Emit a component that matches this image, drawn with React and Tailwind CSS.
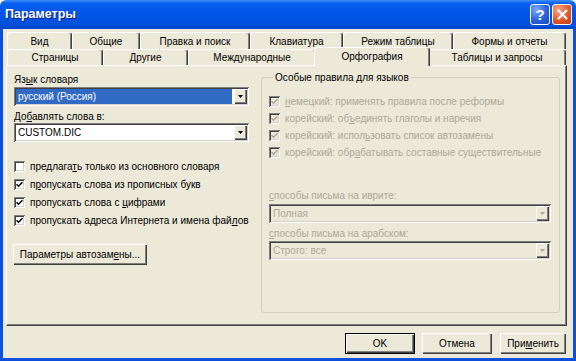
import React from 'react';

// '&' marks the accelerator letter, as in Windows resource strings
function Acc({ text }) {
  const i = text.indexOf('&');
  if (i < 0) return text;
  return (
    <>
      {text.slice(0, i)}
      <span className="underline">{text[i + 1]}</span>
      {text.slice(i + 2)}
    </>
  );
}

const sunken =
  'shadow-[inset_1px_1px_#808080,inset_-1px_-1px_#ffffff,inset_2px_2px_#404040,inset_-2px_-2px_#d4d0c8]';
const raised =
  'shadow-[inset_1px_1px_#ffffff,inset_-1px_-1px_#404040,inset_-2px_-2px_#808080]';

function Check({ checked, disabled }) {
  return (
    <div
      className={`w-[11px] h-[11px] shrink-0 flex items-center justify-center ${sunken} ${
        disabled ? 'bg-[#ece9d8]' : 'bg-white'
      }`}
    >
      {checked && (
        <svg width="7" height="7" viewBox="0 0 7 7">
          <path
            d="M0.5 3.2 L2.5 5.2 L6.5 1.2"
            fill="none"
            stroke={disabled ? '#aca899' : '#000'}
            strokeWidth="1.6"
          />
        </svg>
      )}
    </div>
  );
}

function CheckRow({ label, checked, disabled, h }) {
  return (
    <div className={`flex items-center gap-[5px] whitespace-nowrap ${h}`}>
      <Check checked={checked} disabled={disabled} />
      <span className={disabled ? 'text-[#aca899]' : 'text-black'}>
        <Acc text={label} />
      </span>
    </div>
  );
}

function Combo({ value, width, selected, disabled }) {
  return (
    <div
      className={`${width} h-[19px] flex items-center p-[2px] ${sunken} ${
        disabled ? 'bg-[#ece9d8]' : 'bg-white'
      }`}
    >
      <div
        className={`flex-1 h-full flex items-center pl-[2px] mr-[2px] ${
          selected ? 'bg-[#316ac5] text-white' : disabled ? 'text-[#aca899]' : 'text-black'
        }`}
      >
        {value}
      </div>
      <div className={`w-[13px] h-full bg-[#ece9d8] flex items-center justify-center ${raised}`}>
        <svg width="5" height="3" viewBox="0 0 5 3">
          <path d="M0 0 H5 L2.5 3 Z" fill={disabled ? '#aca899' : '#000'} />
        </svg>
      </div>
    </div>
  );
}

function Button({ children, width, isDefault }) {
  return (
    <div
      className={`${width} h-[21px] flex items-center justify-center whitespace-nowrap bg-[#ece9d8] ${
        isDefault ? 'border border-black' : ''
      } ${raised}`}
    >
      {children}
    </div>
  );
}

const row1 = [
  ['Вид', 'w-[65px]'],
  ['Общие', 'w-[68px]'],
  ['Правка и поиск', 'w-[110px]'],
  ['Клавиатура', 'w-[93px]'],
  ['Режим таблицы', 'w-[110px]'],
  ['Формы и отчеты', 'w-[113px]'],
];

const row2 = [
  ['Страницы', 'w-[96px]'],
  ['Другие', 'w-[85px]'],
  ['Международные', 'w-[128px]'],
  ['Орфография', 'w-[116px]', true],
  ['Таблицы и запросы', 'w-[138px]'],
];

const tabBase =
  'flex items-center justify-center whitespace-nowrap bg-[#ece9d8] border-t border-l border-r border-t-white border-l-white border-r-[#404040] rounded-t-[3px] shadow-[inset_-1px_0_#808080]';

export default function App() {
  return (
    <div className="w-[576px] h-[361px] flex flex-col font-['Liberation_Sans',Arial,sans-serif] text-[10px] leading-[13px] select-none">
      {/* title bar */}
      <div className="h-[29px] shrink-0 flex items-center justify-between pl-[5px] pr-[4px] rounded-t-[6px] bg-[linear-gradient(to_bottom,#3d8df8_0%,#0a5ff0_12%,#0055e6_45%,#004fdc_85%,#0046c8_100%)]">
        <span className="text-white font-bold text-[12.5px] [text-shadow:1px_1px_#0a1e78]">
          Параметры
        </span>
        <div className="flex gap-[2px]">
          <div className="w-[20px] h-[21px] rounded-[3px] border border-white flex items-center justify-center bg-[radial-gradient(circle_at_30%_25%,#7aa8ff,#2b62dc_55%,#1a47b8)]">
            <span className="text-white font-bold text-[15px] leading-none">?</span>
          </div>
          <div className="w-[20px] h-[21px] rounded-[3px] border border-white flex items-center justify-center bg-[radial-gradient(circle_at_30%_25%,#f5a88a,#e0592d_55%,#c3360c)]">
            <svg width="11" height="11" viewBox="0 0 11 11">
              <path d="M1 1 L10 10 M10 1 L1 10" stroke="#fff" strokeWidth="2.2" />
            </svg>
          </div>
        </div>
      </div>

      {/* body */}
      <div className="flex-1 flex flex-col bg-[#ece9d8] border-x-[3px] border-b-[3px] border-[#0a50dc] pl-[3px] pr-[6px] pt-[3px] pb-[4px]">
        <div className="h-[17px] flex ml-[1px]">
          {row1.map(([t, w]) => (
            <div key={t} className={`${tabBase} ${w} h-full`}>
              {t}
            </div>
          ))}
        </div>
        <div className="h-[16px] flex ml-[1px]">
          {row2.map(([t, w, sel]) =>
            sel ? (
              <div key={t} className={`${tabBase} ${w} relative z-10 -mx-[2px] -mt-[2px] h-[19px] border-b-0 pb-[1px]`}>
                {t}
              </div>
            ) : (
              <div key={t} className={`${tabBase} ${w} h-full`}>
                {t}
              </div>
            )
          )}
        </div>

        {/* tab page */}
        <div className="h-[261px] flex border border-t-white border-l-white border-r-[#404040] border-b-[#404040] shadow-[inset_-1px_-1px_#808080]">
          <div className="w-[235px] ml-[7px] pt-[7px] flex flex-col">
            <div className="h-[13px]">
              <Acc text="Яз&ык словаря" />
            </div>
            <div className="mt-[1px]">
              <Combo value="русский (Россия)" width="w-[235px]" selected />
            </div>
            <div className="h-[13px] mt-[4px]">
              <Acc text="До&бавлять слова в:" />
            </div>
            <Combo value="CUSTOM.DIC" width="w-[235px]" />
            <div className="mt-[15px] flex flex-col">
              <CheckRow h="h-[18px]" label="предлага&ть только из основного словаря" />
              <CheckRow h="h-[18px]" checked label="п&ропускать слова из прописных букв" />
              <CheckRow h="h-[18px]" checked label="пропускать слова с &цифрами" />
              <CheckRow h="h-[18px]" checked label="пропускать адреса Интернета и имена фай&лов" />
            </div>
            <div className="mt-[15px] -ml-[1px]">
              <Button width="w-[134px] h-[20px]">
                <Acc text="Параметры автозам&ены..." />
              </Button>
            </div>
          </div>

          <fieldset className="w-[299px] h-[242px] ml-[12px] mt-[5px] border border-[#d0d0bf] rounded-[3px] pl-[7px] pt-[9px]">
            <legend className="ml-[4px] px-[2px] h-[13px]">Особые правила для языков</legend>
            <CheckRow h="h-[17px]" disabled checked label="&немецкий: применять правила после реформы" />
            <CheckRow h="h-[17px]" disabled checked label="корейский: об&ъединять глаголы и наречия" />
            <CheckRow h="h-[17px]" disabled checked label="корейский: испол&ьзовать список автозамены" />
            <CheckRow h="h-[17px]" disabled checked label="корейский: обр&абатывать составные существительные" />
            <div className="h-[13px] mt-[28px] text-[#aca899]">
              <Acc text="&способы письма на иврите:" />
            </div>
            <div className="mt-[2px]">
              <Combo value="Полная" width="w-[282px]" disabled />
            </div>
            <div className="h-[13px] mt-[4px] text-[#aca899]">
              <Acc text="&способы письма на арабском:" />
            </div>
            <div className="mt-[1px]">
              <Combo value="Строго: все" width="w-[282px]" disabled />
            </div>
          </fieldset>
        </div>

        {/* dialog buttons */}
        <div className="mt-[7px] flex justify-end gap-[7px] mr-[1px]">
          <Button width="w-[70px]" isDefault>OK</Button>
          <Button width="w-[70px]">Отмена</Button>
          <div className="ml-[1px]">
            <Button width="w-[66px]">
              <Acc text="При&менить" />
            </Button>
          </div>
        </div>
      </div>
    </div>
  );
}
